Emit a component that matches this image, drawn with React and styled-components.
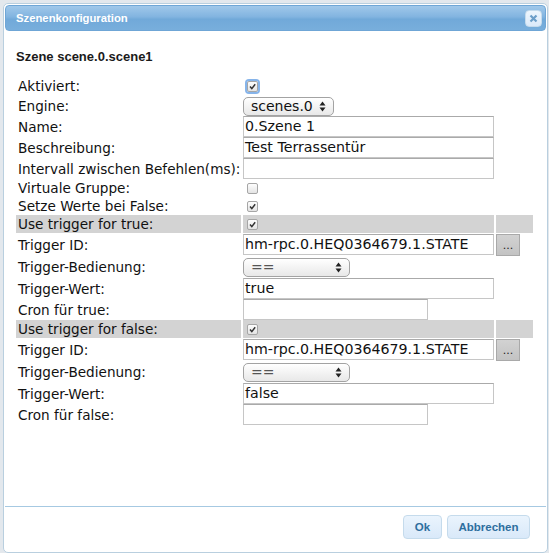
import React from "react";
import styled, { createGlobalStyle } from "styled-components";

const Global = createGlobalStyle`
  html, body { margin: 0; padding: 0; }
  body {
    background: #e3e8ed;
    width: 549px;
    height: 553px;
    overflow: hidden;
    font-family: "DejaVu Sans", "Liberation Sans", sans-serif;
  }
`;

const Page = styled.div`
  padding: 3px 0 0 3px;
`;

const Dialog = styled.div`
  width: 541px;
  height: 546px;
  background: #fff;
  border: 1px solid #b9cfdf;
  border-radius: 5px;
  padding: 1px;
  box-sizing: content-box;
  display: flex;
  flex-direction: column;
`;

const TitleBar = styled.div`
  height: 24px;
  flex: none;
  border: 1px solid #6fa6d6;
  border-radius: 4px;
  background: linear-gradient(#a0c8ea 0%, #82b4e0 45%, #71a9d9 55%, #78aedc 100%);
  display: flex;
  align-items: center;
  justify-content: space-between;
  padding: 0 3px 0 10px;
`;

const Title = styled.span`
  color: #fff;
  font-family: "Liberation Sans", Arial, sans-serif;
  font-weight: bold;
  font-size: 11.3px;
`;

const CloseBtn = styled.div`
  width: 15px;
  height: 15px;
  border: 1px solid #c5dbec;
  border-radius: 4px;
  background: linear-gradient(#eef6fd, #dbeafa);
  display: flex;
  align-items: center;
  justify-content: center;
`;

const Content = styled.div`
  flex: 1;
  padding: 18px 0 0 11px;
`;

const Heading = styled.div`
  font-family: "Liberation Sans", Arial, sans-serif;
  font-weight: bold;
  font-size: 13px;
  color: #1a1a1a;
  margin: 0 0 11px 0;
  line-height: 16px;
`;

const Table = styled.table`
  border-collapse: separate;
  border-spacing: 2px 0;
  margin-left: -2px;
  font-size: 13.6px;
  color: #111;
`;

const Row = styled.tr`
  height: ${(p) => p.$h}px;
  background: ${(p) => (p.$gray ? "#d3d3d3" : "transparent")};
`;

const LabelCell = styled.td`
  width: 223px;
  height: ${(p) => p.$h}px;
  padding: 0 0 0 2px;
  white-space: nowrap;
  vertical-align: middle;
`;

const CtrlCell = styled.td`
  width: 251px;
  padding: 0;
  vertical-align: middle;
`;

const ExtraCell = styled.td`
  width: 37px;
  padding: 0;
  vertical-align: middle;
`;

const TextInput = styled.div`
  box-sizing: border-box;
  width: ${(p) => p.$w || 251}px;
  height: 21px;
  border: 1px solid #c6c6c6;
  border-top-color: #aaa;
  background: #fff;
  font-size: 14.2px;
  line-height: 19px;
  padding-left: 1px;
  color: #111;
  white-space: nowrap;
  overflow: hidden;
`;

const Select = styled.div`
  box-sizing: border-box;
  width: ${(p) => p.$w}px;
  height: 19px;
  border: 1px solid #a3a3a3;
  border-radius: 5px;
  background: linear-gradient(#ffffff, #f1f1f1 60%, #e8e8e8);
  display: flex;
  align-items: center;
  justify-content: space-between;
  padding: 0 7px 0 7px;
  font-size: 14px;
  color: ${(p) => (p.$dim ? "#555" : "#111")};
`;

const CheckBox = styled.div`
  box-sizing: border-box;
  width: 11px;
  height: 11px;
  margin-left: 4px;
  border: 1px solid #a6a6a6;
  border-radius: 2px;
  background: linear-gradient(#fdfdfd, #e4e4e4);
  display: flex;
  align-items: center;
  justify-content: center;
  box-shadow: ${(p) => (p.$focus ? "0 0 0 2px #86b4ea" : "none")};
`;

const DotsButton = styled.div`
  box-sizing: border-box;
  width: 24px;
  height: 22px;
  border: 1px solid #a9a9a9;
  background: linear-gradient(#d2d2d2, #c3c3c3);
  display: flex;
  align-items: flex-end;
  justify-content: center;
  padding-bottom: 4px;
  font-size: 11px;
  line-height: 11px;
  color: #222;
`;

const Footer = styled.div`
  box-sizing: border-box;
  flex: none;
  height: 45px;
  border-top: 1px solid #a6c9e2;
  display: flex;
  justify-content: flex-end;
  align-items: flex-start;
  gap: 5px;
  padding: 8px 16px 0 0;
`;

const Button = styled.div`
  box-sizing: border-box;
  width: ${(p) => p.$w}px;
  height: 24px;
  border: 1px solid #c5dbec;
  border-radius: 4px;
  background: linear-gradient(#eaf4fd, #d9e9f9);
  color: #2e6e9e;
  font-family: "Liberation Sans", Arial, sans-serif;
  font-weight: bold;
  font-size: 11.5px;
  display: flex;
  align-items: center;
  justify-content: center;
`;

const Check = () => (
  <svg width="7" height="7" viewBox="0 0 7 7">
    <path d="M1 3.6 L2.8 5.6 L6.2 1.2" fill="none" stroke="#333" strokeWidth="1.5" />
  </svg>
);

const Arrows = () => (
  <svg width="7" height="11" viewBox="0 0 7 11">
    <path d="M3.5 0.5 L6.5 4.5 L0.5 4.5 Z" fill="#222" />
    <path d="M3.5 10.5 L6.5 6.5 L0.5 6.5 Z" fill="#222" />
  </svg>
);

const CloseIcon = () => (
  <svg width="9" height="9" viewBox="0 0 9 9">
    <path d="M1.5 1.5 L7.5 7.5 M7.5 1.5 L1.5 7.5" stroke="#6d9fc9" strokeWidth="2.2" />
  </svg>
);

const CheckRow = ({ label, h, gray, checked, focus }) => (
  <Row $h={h} $gray={gray}>
    <LabelCell $h={h}>{label}</LabelCell>
    <CtrlCell>
      <CheckBox $focus={focus}>{checked && <Check />}</CheckBox>
    </CtrlCell>
    <ExtraCell />
  </Row>
);

const InputRow = ({ label, value, w, h = 21, extra }) => (
  <Row $h={h}>
    <LabelCell $h={h}>{label}</LabelCell>
    <CtrlCell>
      <TextInput $w={w}>{value}</TextInput>
    </CtrlCell>
    <ExtraCell>{extra}</ExtraCell>
  </Row>
);

const SelectRow = ({ label, value, w, h, dim }) => (
  <Row $h={h}>
    <LabelCell $h={h}>{label}</LabelCell>
    <CtrlCell>
      <Select $w={w} $dim={dim}>
        <span>{value}</span>
        <Arrows />
      </Select>
    </CtrlCell>
    <ExtraCell />
  </Row>
);

const TriggerBlock = ({ kind }) => (
  <>
    <CheckRow label={`Use trigger for ${kind}:`} h={18} gray checked />
    <InputRow
      label="Trigger ID:"
      value="hm-rpc.0.HEQ0364679.1.STATE"
      h={23}
      extra={<DotsButton>...</DotsButton>}
    />
    <SelectRow label="Trigger-Bedienung:" value="==" w={107} h={22} dim />
    <InputRow label="Trigger-Wert:" value={kind} />
    <InputRow label={`Cron für ${kind}:`} value="" w={185} />
  </>
);

export default function App() {
  return (
    <>
      <Global />
      <Page>
        <Dialog>
          <TitleBar>
            <Title>Szenenkonfiguration</Title>
            <CloseBtn>
              <CloseIcon />
            </CloseBtn>
          </TitleBar>
          <Content>
            <Heading>Szene scene.0.scene1</Heading>
            <Table>
              <tbody>
                <CheckRow label="Aktiviert:" h={20} checked focus />
                <SelectRow label="Engine:" value="scenes.0" w={91} h={20} />
                <InputRow label="Name:" value="0.Szene 1" />
                <InputRow label="Beschreibung:" value="Test Terrassentür" />
                <InputRow label="Intervall zwischen Befehlen(ms):" value="" />
                <CheckRow label="Virtuale Gruppe:" h={18} />
                <CheckRow label="Setze Werte bei False:" h={18} checked />
                <TriggerBlock kind="true" />
                <TriggerBlock kind="false" />
              </tbody>
            </Table>
          </Content>
          <Footer>
            <Button $w={39}>Ok</Button>
            <Button $w={83}>Abbrechen</Button>
          </Footer>
        </Dialog>
      </Page>
    </>
  );
}
